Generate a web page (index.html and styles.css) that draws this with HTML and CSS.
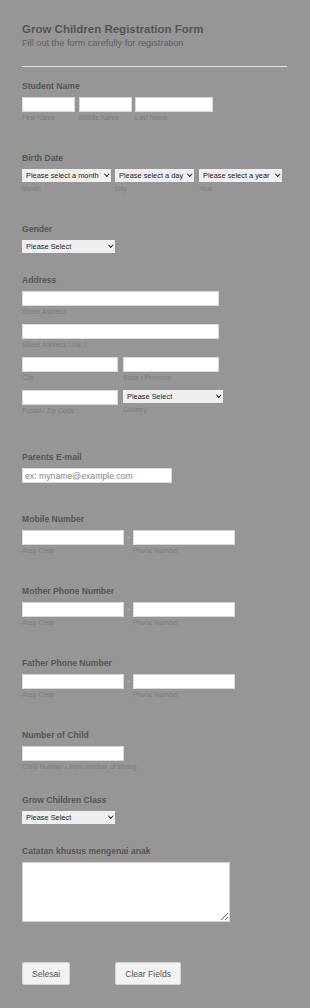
FILE: index.html
```html
<!DOCTYPE html>
<html lang="en">
<head>
  <meta charset="UTF-8">
  <meta name="viewport" content="width=device-width, initial-scale=1.0">
  <title>Grow Children Registration Form</title>
  <link rel="stylesheet" href="styles.css">
</head>
<body>
  <form class="form">
    <div class="form-header">
      <h1>Grow Children Registration Form</h1>
      <p>Fill out the form carefully for registration</p>
    </div>
    <hr class="divider">

    <div class="field first">
      <label class="field-label">Student Name</label>
      <div class="row">
        <div class="cell"><input type="text" class="w-first"><span class="sub">First Name</span></div>
        <div class="cell gap-4"><input type="text" class="w-first"><span class="sub">Middle Name</span></div>
        <div class="cell gap-3"><input type="text" class="w-last"><span class="sub">Last Name</span></div>
      </div>
    </div>

    <div class="field">
      <label class="field-label">Birth Date</label>
      <div class="row">
        <div class="cell">
          <span class="select w-month"><select><option>Please select a month</option></select></span>
          <span class="sub">Month</span>
        </div>
        <div class="cell gap-4">
          <span class="select w-day"><select><option>Please select a day</option></select></span>
          <span class="sub">Day</span>
        </div>
        <div class="cell gap-5">
          <span class="select w-year"><select><option>Please select a year</option></select></span>
          <span class="sub">Year</span>
        </div>
      </div>
    </div>

    <div class="field">
      <label class="field-label">Gender</label>
      <span class="select w-short"><select><option>Please Select</option></select></span>
    </div>

    <div class="field near">
      <label class="field-label">Address</label>
      <div class="cell"><input type="text" class="w-full"><span class="sub">Street Address</span></div>
      <div class="cell line"><input type="text" class="w-full"><span class="sub">Street Address Line 2</span></div>
      <div class="row line">
        <div class="cell"><input type="text" class="w-half"><span class="sub">City</span></div>
        <div class="cell gap-5"><input type="text" class="w-half"><span class="sub">State / Province</span></div>
      </div>
      <div class="row line">
        <div class="cell"><input type="text" class="w-half"><span class="sub">Postal / Zip Code</span></div>
        <div class="cell gap-5">
          <span class="select w-country"><select><option>Please Select</option></select></span>
          <span class="sub">Country</span>
        </div>
      </div>
    </div>

    <div class="field far">
      <label class="field-label">Parents E-mail</label>
      <input type="email" class="w-email" placeholder="ex: myname@example.com">
    </div>

    <div class="field">
      <label class="field-label">Mobile Number</label>
      <div class="row">
        <div class="cell"><input type="tel" class="w-phone"><span class="sub">Area Code</span></div>
        <span class="dash">-</span>
        <div class="cell"><input type="tel" class="w-phone"><span class="sub">Phone Number</span></div>
      </div>
    </div>

    <div class="field">
      <label class="field-label">Mother Phone Number</label>
      <div class="row">
        <div class="cell"><input type="tel" class="w-phone"><span class="sub">Area Code</span></div>
        <span class="dash">-</span>
        <div class="cell"><input type="tel" class="w-phone"><span class="sub">Phone Number</span></div>
      </div>
    </div>

    <div class="field">
      <label class="field-label">Father Phone Number</label>
      <div class="row">
        <div class="cell"><input type="tel" class="w-phone"><span class="sub">Area Code</span></div>
        <span class="dash">-</span>
        <div class="cell"><input type="tel" class="w-phone"><span class="sub">Phone Number</span></div>
      </div>
    </div>

    <div class="field">
      <label class="field-label">Number of Child</label>
      <div class="cell"><input type="text" class="w-phone"><span class="sub">Child Number / from number of sibling</span></div>
    </div>

    <div class="field class-field">
      <label class="field-label">Grow Children Class</label>
      <span class="select w-short"><select><option>Please Select</option></select></span>
    </div>

    <div class="field near">
      <label class="field-label">Catatan khusus mengenai anak</label>
      <textarea class="notes"></textarea>
    </div>

    <div class="buttons">
      <button type="submit" class="btn">Selesai</button>
      <button type="reset" class="btn">Clear Fields</button>
    </div>
  </form>
</body>
</html>
```

FILE: styles.css
```css
:root {
  --bg: #969696;
  --label: #555555;
  --sub: #7c7c7c;
  --border: #dadada;
}

body {
  margin: 0;
  background: var(--bg);
  font-family: "Liberation Sans", Arial, sans-serif;
}

.form {
  width: 265px;
  padding: 22px 0 40px 22px;
}

.form-header h1 {
  margin: 0;
  font-size: 11.5px;
  line-height: 14px;
  font-weight: bold;
  color: var(--label);
}

.form-header p {
  margin: 1px 0 0;
  font-size: 9.2px;
  line-height: 12px;
  color: #606060;
}

.divider {
  height: 1px;
  margin: 17px 0 0;
  border: none;
  background: #e2e2e2;
}

.field {
  margin-top: 31px;
}

.field.first {
  margin-top: 14px;
}

.field.near {
  margin-top: 22px;
}

.field.class-field {
  margin-top: 24px;
}

.field.far {
  margin-top: 37px;
}

.field-label {
  display: block;
  margin-bottom: 5px;
  font-size: 8.6px;
  line-height: 11px;
  font-weight: bold;
  color: var(--label);
}

.row {
  display: flex;
  align-items: flex-start;
}

.cell {
  display: flex;
  flex-direction: column;
}

.line {
  margin-top: 8px;
}

.gap-3 { margin-left: 3px; }
.gap-4 { margin-left: 4px; }
.gap-5 { margin-left: 5px; }

input {
  display: block;
  box-sizing: border-box;
  height: 15px;
  margin: 0;
  padding: 0 2px;
  border: 1px solid var(--border);
  background: #fff;
  font-family: inherit;
  font-size: 8.7px;
  color: #333;
}

input::placeholder {
  color: #868686;
}

.sub {
  margin-top: 1px;
  font-size: 6.8px;
  line-height: 9px;
  color: var(--sub);
  white-space: nowrap;
}

.w-first { width: 53px; }
.w-last { width: 78px; }
.w-full { width: 197px; }
.w-half { width: 96px; }
.w-email { width: 150px; }
.w-phone { width: 102px; }

.select {
  position: relative;
  display: block;
  height: 13px;
  margin-bottom: 1px;
}

.select select {
  -webkit-appearance: none;
  appearance: none;
  display: block;
  box-sizing: border-box;
  width: 100%;
  height: 13px;
  margin: 0;
  padding: 0 10px 0 4px;
  border: none;
  border-radius: 0;
  background: #efefef;
  font-family: inherit;
  font-size: 7.4px;
  color: #222;
}

.select::after {
  content: "";
  position: absolute;
  right: 3px;
  top: 2.5px;
  width: 2.5px;
  height: 2.5px;
  border-right: 1.6px solid #222;
  border-bottom: 1.6px solid #222;
  transform: rotate(45deg);
  pointer-events: none;
}

.w-month { width: 89px; }
.w-day { width: 79px; }
.w-year { width: 83px; }
.w-short { width: 93px; }
.w-country { width: 100px; }

.dash {
  width: 9px;
  margin-top: 2px;
  text-align: center;
  font-size: 8.6px;
  line-height: 11px;
  color: #d4d4d4;
}

.notes {
  display: block;
  box-sizing: border-box;
  width: 208px;
  height: 60px;
  margin: 0;
  border: 1px solid #d0d0d0;
  background: #fff;
}

.buttons {
  display: flex;
  gap: 45px;
  margin-top: 40px;
}

.btn {
  height: 23px;
  padding: 0 9px;
  border: 1px solid #d3d3d3;
  border-radius: 2px;
  background: #f2f2f2;
  font-family: inherit;
  font-size: 8.6px;
  color: var(--label);
  cursor: pointer;
}
```
